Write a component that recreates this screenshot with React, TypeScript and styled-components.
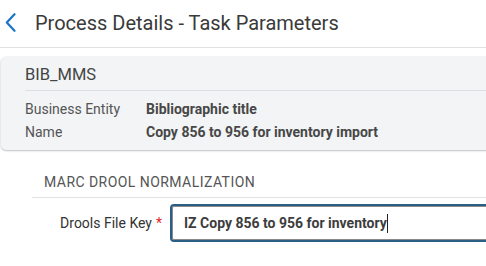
import React from "react";
import styled, { createGlobalStyle } from "styled-components";

const Global = createGlobalStyle`
  html, body { margin: 0; padding: 0; background: #ffffff; }
  body { font-family: Roboto, "Noto Sans", Arial, sans-serif; overflow: hidden; }
  * { box-sizing: border-box; }
`;

const Page = styled.div`
  width: 486px;
  height: 266px;
  overflow: hidden;
  display: flex;
  flex-direction: column;
`;

const Header = styled.header`
  height: 48px;
  display: flex;
  align-items: center;
  padding-left: 5px;
  padding-bottom: 2px;
  border-bottom: 1px solid #e1e1e1;
`;

const BackButton = styled.button`
  border: 0;
  background: none;
  padding: 0;
  width: 12px;
  height: 20px;
  display: flex;
  align-items: center;
  color: #1b74c6;
  cursor: pointer;
`;

const Title = styled.h1`
  margin: 0 0 0 18px;
  font-size: 20px;
  font-weight: 400;
  color: #3a3a3a;
  white-space: nowrap;
`;

const Content = styled.main`
  padding: 9px 0 0 1px;
  display: flex;
  flex-direction: column;
`;

const Card = styled.section`
  width: 540px;
  background: #f2f4f5;
  border-radius: 5px;
  box-shadow: 0 1px 2px rgba(0, 0, 0, 0.22), 0 0 0 1px rgba(0, 0, 0, 0.03);
  padding: 0 0 6px 24px;
`;

const CardTitle = styled.div`
  height: 34px;
  line-height: 34px;
  font-size: 16.5px;
  color: #444;
  border-bottom: 1px solid #dcdfe1;
  padding-top: 1px;
`;

const InfoList = styled.div`
  padding-top: 7px;
  display: grid;
  grid-template-columns: 121px 1fr;
`;

const InfoLabel = styled.div`
  font-size: 14px;
  line-height: 23px;
  color: #555;
`;

const InfoValue = styled.div`
  font-size: 14px;
  line-height: 23px;
  font-weight: 700;
  color: #474747;
  white-space: nowrap;
`;

const Section = styled.section`
  margin-left: 31px;
  margin-top: 16px;
  width: 520px;
`;

const SectionTitle = styled.h2`
  margin: 0;
  height: 32px;
  line-height: 32px;
  padding-left: 12px;
  font-size: 14px;
  font-weight: 400;
  letter-spacing: 0.45px;
  color: #555;
  border-bottom: 1px solid #e1e1e1;
`;

const FieldRow = styled.div`
  display: flex;
  align-items: center;
  margin-top: 6px;
`;

const FieldLabel = styled.label`
  flex: 0 0 130px;
  text-align: right;
  font-size: 14px;
  color: #333;
  white-space: nowrap;
`;

const Required = styled.span`
  color: #e0262b;
  margin-left: 4px;
`;

const InputBox = styled.div`
  flex: 0 0 360px;
  margin-left: 8px;
  height: 38px;
  border: 2px solid #2b5f86;
  border-radius: 4px;
  box-shadow: inset 0 0 0 1px #8a8a8a;
  display: flex;
  align-items: center;
  padding-left: 12px;
`;

const InputText = styled.span`
  font-size: 14px;
  font-weight: 700;
  color: #3d3d3d;
  white-space: nowrap;
`;

const Caret = styled.span`
  display: inline-block;
  width: 1px;
  height: 19px;
  background: #222;
`;

export default function App() {
  return (
    <Page>
      <Global />
      <Header>
        <BackButton aria-label="Back">
          <svg width="11" height="19" viewBox="0 0 11 19" fill="none">
            <path d="M9.5 1.2 L1.8 9.5 L9.5 17.8" stroke="currentColor" strokeWidth="2.2" strokeLinecap="round" strokeLinejoin="round" />
          </svg>
        </BackButton>
        <Title>Process Details - Task Parameters</Title>
      </Header>
      <Content>
        <Card>
          <CardTitle>BIB_MMS</CardTitle>
          <InfoList>
            <InfoLabel>Business Entity</InfoLabel>
            <InfoValue>Bibliographic title</InfoValue>
            <InfoLabel>Name</InfoLabel>
            <InfoValue>Copy 856 to 956 for inventory import</InfoValue>
          </InfoList>
        </Card>
        <Section>
          <SectionTitle>MARC DROOL NORMALIZATION</SectionTitle>
          <FieldRow>
            <FieldLabel>
              Drools File Key<Required>*</Required>
            </FieldLabel>
            <InputBox>
              <InputText>IZ Copy 856 to 956 for inventory</InputText>
              <Caret />
            </InputBox>
          </FieldRow>
        </Section>
      </Content>
    </Page>
  );
}
